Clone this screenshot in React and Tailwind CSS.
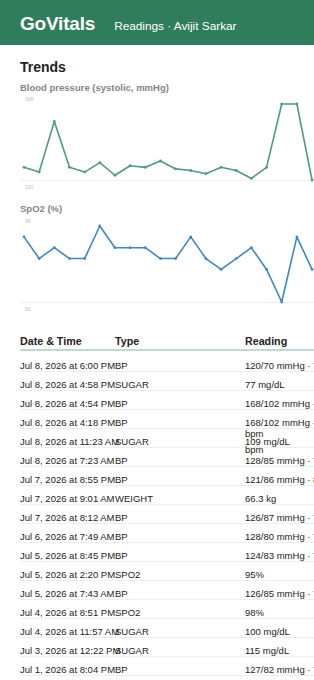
import React from "react";

const bp = [128, 125, 157, 128, 125, 131, 123, 129, 128, 132, 127, 126, 124, 128, 126, 121, 128, 168, 168, 120];
const spo2 = [98, 96, 97, 96, 96, 99, 97, 97, 97, 96, 96, 98, 96, 95, 96, 97, 95, 92, 98, 95];

const readings = [
  { date: "Jul 8, 2026 at 6:00 PM", type: "BP", lines: ["120/70 mmHg · 72 bpm"] },
  { date: "Jul 8, 2026 at 4:58 PM", type: "SUGAR", lines: ["77 mg/dL"] },
  { date: "Jul 8, 2026 at 4:54 PM", type: "BP", lines: ["168/102 mmHg · 98 bpm"] },
  { date: "Jul 8, 2026 at 4:18 PM", type: "BP", lines: ["168/102 mmHg · 104", "bpm"] },
  { date: "Jul 8, 2026 at 11:23 AM", type: "SUGAR", lines: ["109 mg/dL"] },
  { date: "Jul 8, 2026 at 7:23 AM", type: "BP", lines: ["bpm", "128/85 mmHg · 78 bpm"], up: true },
  { date: "Jul 7, 2026 at 8:55 PM", type: "BP", lines: ["121/86 mmHg · 80 bpm"] },
  { date: "Jul 7, 2026 at 9:01 AM", type: "WEIGHT", lines: ["66.3 kg"] },
  { date: "Jul 7, 2026 at 8:12 AM", type: "BP", lines: ["126/87 mmHg · 76 bpm"] },
  { date: "Jul 6, 2026 at 7:49 AM", type: "BP", lines: ["128/80 mmHg · 74 bpm"] },
  { date: "Jul 5, 2026 at 8:45 PM", type: "BP", lines: ["124/83 mmHg · 70 bpm"] },
  { date: "Jul 5, 2026 at 2:20 PM", type: "SPO2", lines: ["95%"] },
  { date: "Jul 5, 2026 at 7:43 AM", type: "BP", lines: ["126/85 mmHg · 75 bpm"] },
  { date: "Jul 4, 2026 at 8:51 PM", type: "SPO2", lines: ["98%"] },
  { date: "Jul 4, 2026 at 11:57 AM", type: "SUGAR", lines: ["100 mg/dL"] },
  { date: "Jul 3, 2026 at 12:22 PM", type: "SUGAR", lines: ["115 mg/dL"] },
  { date: "Jul 1, 2026 at 8:04 PM", type: "BP", lines: ["127/82 mmHg · 71 bpm"] },
];

function Chart({ values, min, max, color }) {
  const pts = values.map((v, i) => [4 + i * 15.16, 10 + ((max - v) / (max - min)) * 76]);
  return (
    <svg width="300" height="98" className="block">
      <text x="5" y="7" fontSize="5" fill="#bbb">{max}</text>
      <line x1="0" y1="86.5" x2="300" y2="86.5" stroke="#f0f0f0" strokeWidth="1" />
      <text x="5" y="95" fontSize="5" fill="#bbb">{min}</text>
      <polyline
        points={pts.map((p) => p.join(",")).join(" ")}
        fill="none"
        stroke={color}
        strokeWidth="1.6"
        strokeLinejoin="round"
      />
      {pts.map((p, i) => (
        <circle key={i} cx={p[0]} cy={p[1]} r="1.4" fill={color} />
      ))}
    </svg>
  );
}

export default function App() {
  return (
    <div className="w-full overflow-hidden bg-white text-[#222]" style={{ fontFamily: '"Liberation Sans", Arial, sans-serif' }}>
      <header className="h-[45px] bg-[#2f7d5b] flex items-baseline gap-[19px] px-5 pt-[13px] text-white">
        <span className="text-[19px] font-bold leading-[22px] tracking-[-0.2px]">GoVitals</span>
        <span className="text-[11.8px] leading-[14px]">Readings · Avijit Sarkar</span>
      </header>

      <main className="px-5 pt-[14px]">
        <h1 className="text-[14px] leading-[17px] font-bold">Trends</h1>

        <p className="mt-[6px] text-[9.5px] leading-[12px] font-bold text-[#858585]">Blood pressure (systolic, mmHg)</p>
        <Chart values={bp} min={120} max={168} color="#4f9b7b" />

        <p className="mt-[11px] text-[9.5px] leading-[12px] font-bold text-[#858585]">SpO2 (%)</p>
        <div className="mt-[1px]">
          <Chart values={spo2} min={92} max={99} color="#3f88bf" />
        </div>

        <div className="mt-[21px] w-[340px]">
          <div className="grid grid-cols-[95px_130px_115px] pb-[1px] border-b-2 border-[#c3d9cf] text-[10.7px] leading-[13px] font-bold">
            <span>Date &amp; Time</span>
            <span>Type</span>
            <span>Reading</span>
          </div>
          <div className="pt-[2px]">
            {readings.map((r, i) => (
              <div
                key={i}
                className="grid grid-cols-[95px_130px_115px] h-[19px] pt-[7px] border-b border-[#eeeeee] text-[9.5px] leading-[11px]"
              >
                <span className="whitespace-nowrap">{r.date}</span>
                <span className="whitespace-nowrap">{r.type}</span>
                <div className={r.up ? "-mt-[11px] whitespace-nowrap" : "whitespace-nowrap"}>
                  {r.lines.map((l, j) => (
                    <div key={j}>{l}</div>
                  ))}
                </div>
              </div>
            ))}
          </div>
        </div>
      </main>
    </div>
  );
}
